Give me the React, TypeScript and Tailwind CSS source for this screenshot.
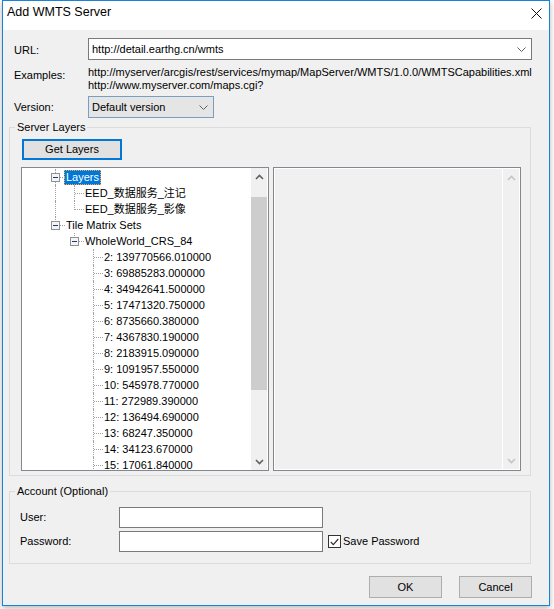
import React from "react";

type TreeNode = {
  label: string;
  guides: boolean[]; // ancestor cells: does a vertical line pass through
  hasNext: boolean;
  button?: boolean;
  selected?: boolean;
};

const scales = [
  "2: 139770566.010000",
  "3: 69885283.000000",
  "4: 34942641.500000",
  "5: 17471320.750000",
  "6: 8735660.380000",
  "7: 4367830.190000",
  "8: 2183915.090000",
  "9: 1091957.550000",
  "10: 545978.770000",
  "11: 272989.390000",
  "12: 136494.690000",
  "13: 68247.350000",
  "14: 34123.670000",
  "15: 17061.840000",
];

const nodes: TreeNode[] = [
  { label: "Layers", guides: [], hasNext: true, button: true, selected: true },
  { label: "EED_数据服务_注记", guides: [true], hasNext: true },
  { label: "EED_数据服务_影像", guides: [true], hasNext: false },
  { label: "Tile Matrix Sets", guides: [], hasNext: false, button: true },
  { label: "WholeWorld_CRS_84", guides: [false], hasNext: false, button: true },
  ...scales.map((s) => ({ label: s, guides: [false, false], hasNext: true })),
];

const Chevron = ({ up, color, className }: { up?: boolean; color: string; className?: string }) => (
  <svg width="9" height="6" viewBox="0 0 9 6" className={className}>
    <polyline
      points={up ? "1,5 4.5,1.5 8,5" : "1,1 4.5,4.5 8,1"}
      fill="none"
      stroke={color}
      strokeWidth="1.6"
    />
  </svg>
);

const ComboArrow = () => (
  <svg width="9" height="5" viewBox="0 0 9 5">
    <polyline points="0.5,0.5 4.5,4.5 8.5,0.5" fill="none" stroke="#606060" strokeWidth="1" />
  </svg>
);

const TreeRow = ({ node }: { node: TreeNode }) => (
  <div className="flex h-[16px] items-center">
    <div className="w-[24px] shrink-0" />
    {node.guides.map((g, i) => (
      <div key={i} className="relative h-full w-[19px] shrink-0">
        {g && (
          <div className="absolute left-[9px] top-0 h-full border-l border-dotted border-[#a0a0a0]" />
        )}
      </div>
    ))}
    <div className="relative h-full w-[19px] shrink-0">
      <div
        className={
          node.hasNext
            ? "absolute left-[9px] top-0 h-full border-l border-dotted border-[#a0a0a0]"
            : "absolute left-[9px] top-0 h-[9px] border-l border-dotted border-[#a0a0a0]"
        }
      />
      <div className="absolute left-[10px] top-[8px] w-[9px] border-t border-dotted border-[#a0a0a0]" />
      {node.button && (
        <div className="absolute left-[5px] top-[4px] flex h-[9px] w-[9px] items-center justify-center border border-[#919191] bg-[#f4f4f4]">
          <div className="h-px w-[5px] bg-[#1f3a6e]" />
        </div>
      )}
    </div>
    <span
      className={
        node.selected
          ? "-ml-px h-[15px] whitespace-nowrap border border-dotted border-[#ffa64d] bg-[#0078d7] px-px leading-[13px] text-white"
          : "whitespace-nowrap px-[1px] leading-[15px]"
      }
    >
      {node.label}
    </span>
  </div>
);

export default function App() {
  return (
    <div className="h-[609px] w-[554px] overflow-hidden bg-white font-['Liberation_Sans','Noto_Sans_CJK_SC',sans-serif] text-[11px] text-black">
      <div className="ml-[2px] flex h-[606px] w-[548px] flex-col border border-[#1883d7] shadow-[0_2px_6px_rgba(0,0,0,0.3)]">
        {/* title bar */}
        <div className="flex h-[29px] shrink-0 items-start justify-between bg-white pl-[4px] pr-[7px]">
          <div className="pt-[4px] text-[12.5px] leading-[15px]">Add WMTS Server</div>
          <svg width="11" height="11" viewBox="0 0 11 11" className="mt-[7px]">
            <line x1="0.5" y1="0.5" x2="10.5" y2="10.5" stroke="#111" strokeWidth="1" />
            <line x1="10.5" y1="0.5" x2="0.5" y2="10.5" stroke="#111" strokeWidth="1" />
          </svg>
        </div>

        {/* body */}
        <div className="flex flex-1 flex-col bg-[#f0f0f0] px-[6px]">
          <div className="mt-[8px] flex h-[22px] items-center pl-[5px]">
            <div className="w-[74px] pt-[2px]">URL:</div>
            <div className="flex h-[22px] w-[444px] items-center justify-between border border-[#7a7a7a] bg-white pl-[3px] pr-[5px]">
              <span>http://detail.earthg.cn/wmts</span>
              <ComboArrow />
            </div>
          </div>

          <div className="mt-[6px] flex pl-[5px] leading-[13px]">
            <div className="w-[74px] pt-[3px]">Examples:</div>
            <div>
              <div>http://myserver/arcgis/rest/services/mymap/MapServer/WMTS/1.0.0/WMTSCapabilities.xml</div>
              <div>http://www.myserver.com/maps.cgi?</div>
            </div>
          </div>

          <div className="mt-[4px] flex h-[22px] items-center pl-[5px]">
            <div className="w-[74px]">Version:</div>
            <div className="flex h-[22px] w-[126px] items-center justify-between border border-[#7a9ebf] bg-[#e5e5e5] pl-[3px] pr-[5px]">
              <span>Default version</span>
              <ComboArrow />
            </div>
          </div>

          {/* server layers group */}
          <fieldset className="mt-[2px] w-[522px] border border-[#dcdcdc] pb-[4px]">
            <legend className="ml-[5px] px-[2px] leading-[14px]">Server Layers</legend>
            <button className="ml-[12px] mt-[5px] flex h-[21px] w-[100px] items-center justify-center border-2 border-[#0078d7] bg-[#e1e1e1]">
              Get Layers
            </button>
            <div className="ml-[11px] mt-[7px] flex gap-[4px]">
              {/* tree */}
              <div className="flex h-[304px] w-[248px] border border-[#828790] bg-white">
                <div className="flex-1 overflow-hidden pt-px">
                  {nodes.map((n, i) => (
                    <TreeRow key={i} node={n} />
                  ))}
                </div>
                <div className="flex w-[16px] flex-col bg-[#f0f0f0]">
                  <div className="flex h-[17px] items-center justify-center">
                    <Chevron up color="#606060" />
                  </div>
                  <div className="flex-1">
                    <div className="mt-[12px] h-[193px] bg-[#cdcdcd]" />
                  </div>
                  <div className="flex h-[17px] items-center justify-center">
                    <Chevron color="#606060" />
                  </div>
                </div>
                <div className="w-px bg-white" />
              </div>
              {/* disabled list */}
              <div className="flex h-[304px] w-[248px] border border-[#828790]">
                <div className="flex flex-1 border border-white bg-[#f0f0f0]">
                  <div className="flex-1 border-r border-white" />
                  <div className="flex w-[16px] flex-col justify-between">
                    <div className="flex h-[17px] items-center justify-center">
                      <Chevron up color="#c4c4c4" />
                    </div>
                    <div className="flex h-[17px] items-center justify-center">
                      <Chevron color="#c4c4c4" />
                    </div>
                  </div>
                </div>
              </div>
            </div>
          </fieldset>

          {/* account group */}
          <fieldset className="mt-[8px] w-[522px] border border-[#dcdcdc] pb-[11px]">
            <legend className="ml-[5px] px-[2px] leading-[14px]">Account (Optional)</legend>
            <div className="mt-[9px] flex h-[21px] items-center pl-[10px]">
              <div className="w-[99px]">User:</div>
              <div className="h-[21px] w-[204px] border border-[#7a7a7a] bg-white" />
            </div>
            <div className="mt-[3px] flex h-[21px] items-center pl-[10px]">
              <div className="w-[99px]">Password:</div>
              <div className="h-[21px] w-[204px] border border-[#7a7a7a] bg-white" />
              <div className="ml-[5px] flex h-[13px] w-[13px] items-center justify-center border border-[#333] bg-white">
                <svg width="9" height="8" viewBox="0 0 9 8">
                  <polyline points="0.8,4 3.3,6.6 8.3,1" fill="none" stroke="#333" strokeWidth="1.2" />
                </svg>
              </div>
              <span className="ml-[2px]">Save Password</span>
            </div>
          </fieldset>

          <div className="mt-[12px] flex w-[523px] justify-end gap-[17px]">
            <button className="flex h-[22px] w-[73px] items-center justify-center border border-[#adadad] bg-[#e1e1e1]">
              OK
            </button>
            <button className="flex h-[22px] w-[73px] items-center justify-center border border-[#adadad] bg-[#e1e1e1]">
              Cancel
            </button>
          </div>
        </div>
      </div>
    </div>
  );
}
